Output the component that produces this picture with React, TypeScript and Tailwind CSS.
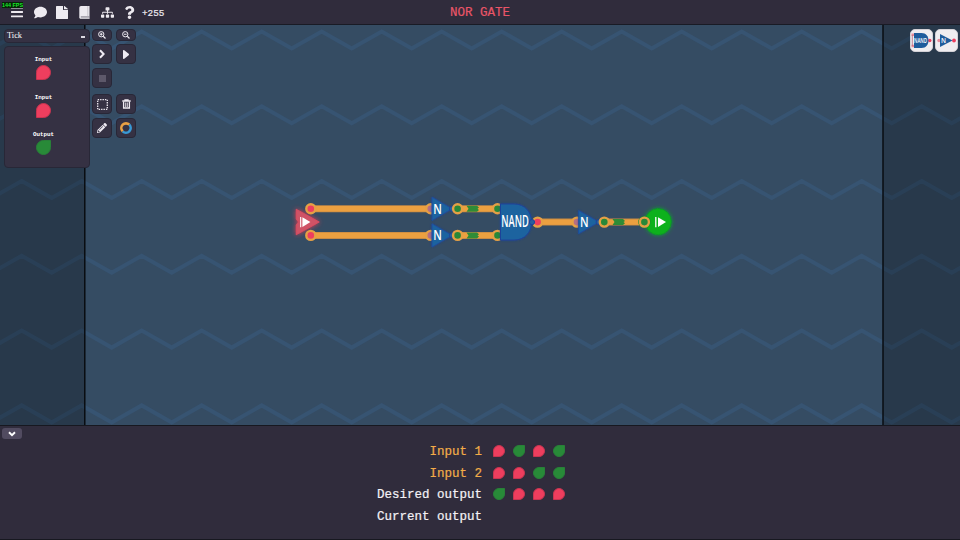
import * as React from "react";
import {
  FaBars,
  FaComment,
  FaFile,
  FaPencilAlt,
  FaPlay,
  FaQuestion,
  FaSitemap,
} from "react-icons/fa";

const RED = "#ee3e5e";
const GREEN = "#288838";

const truthTable = [
  { label: "Input 1", color: "text-[#f2ac48]", values: [0, 1, 0, 1] },
  { label: "Input 2", color: "text-[#f2ac48]", values: [0, 0, 1, 1] },
  { label: "Desired output", color: "text-[#f4f2f6]", values: [1, 0, 0, 0] },
  { label: "Current output", color: "text-[#f4f2f6]", values: [] },
];

const ticks = [
  { label: "Input", on: false },
  { label: "Input", on: false },
  { label: "Output", on: true },
];

function Drop({ on, size }: { on: boolean; size: string }) {
  return (
    <span
      className={`block border ${size} ${
        on
          ? "rounded-full rounded-tr-none border-[#288038] bg-[#288a38]"
          : "rounded-full rounded-bl-none border-[#c93551] bg-[#ee3e5e]"
      }`}
    />
  );
}

function ToolButton({ size = "h-5", className = "", children }: any) {
  return (
    <button
      className={`flex ${size} w-5 items-center justify-center rounded-[4px] border border-[#282737] bg-[#353143] text-[#eeeaf2] ${className}`}
    >
      {children}
    </button>
  );
}

function Magnifier({ plus }: { plus?: boolean }) {
  return (
    <svg viewBox="0 0 16 16" className="h-2 w-2" fill="none" stroke="currentColor" strokeWidth="2">
      <circle cx="6.5" cy="6.5" r="5.3" />
      <path d="M10.5 10.5L15 15" strokeWidth="2.6" />
      <path d="M3.8 6.5H9.2" />
      {plus && <path d="M6.5 3.8V9.2" />}
    </svg>
  );
}

function zigzag(y: number) {
  let d = `M-38.3 ${y}`;
  for (let i = 1; i < 35; i++) {
    d += ` L${-38.3 + i * 30} ${i % 2 ? y + 17 : y}`;
  }
  return d;
}

function Wire({ x1, x2, y }: { x1: number; x2: number; y: number }) {
  return (
    <g>
      <path d={`M${x1} ${y}H${x2}`} stroke="#c98a43" strokeWidth="7" />
      <path d={`M${x1} ${y}H${x2}`} stroke="#eca040" strokeWidth="5.4" />
    </g>
  );
}

function Pin({ x, y, color }: { x: number; y: number; color: string }) {
  return <circle cx={x} cy={y} r="4.5" fill={color} stroke="#e5a045" strokeWidth="2.4" />;
}

function Pulse({ x, y }: { x: number; y: number }) {
  return (
    <path
      d={`M${x - 6} ${y - 3}H${x + 4.5}L${x + 6.5} ${y - 1.2}L${x + 5} ${y}L${x + 6.5} ${y + 1.2}L${x + 4.5} ${y + 3}H${x - 6}L${x - 4} ${y}Z`}
      fill="#2f8c36"
    />
  );
}

function NotGate({ x, y }: { x: number; y: number }) {
  return (
    <g>
      <path
        d={`M${x} ${y - 11.6}L${x + 20} ${y}L${x} ${y + 11.6}Z`}
        fill="#1f649f"
        stroke="#1c4da0"
        strokeWidth="0.9"
        filter="url(#blueGlow)"
      />
      <circle cx={x + 20} cy={y} r="2.6" fill="#285f9c" stroke="#1c439a" strokeWidth="1" />
      <text
        x={x + 1.2}
        y={y + 4.9}
        textLength="8.6"
        lengthAdjust="spacingAndGlyphs"
        className="fill-white font-['Open_Sans',sans-serif] text-[14px] font-semibold"
      >
        N
      </text>
    </g>
  );
}

function Board() {
  return (
    <svg viewBox="0 25 960 400" className="block h-full w-full">
      <defs>
        <filter id="blueGlow" x="-30%" y="-30%" width="160%" height="160%">
          <feDropShadow dx="0" dy="0" stdDeviation="1.2" floodColor="#1d3c9b" floodOpacity="0.65" />
        </filter>
        <filter id="redGlow" x="-50%" y="-50%" width="200%" height="200%">
          <feDropShadow dx="0" dy="0" stdDeviation="2.4" floodColor="#f03a50" floodOpacity="0.9" />
        </filter>
        <filter id="greenGlow" x="-50%" y="-50%" width="200%" height="200%">
          <feDropShadow dx="0" dy="0" stdDeviation="2.2" floodColor="#08b820" floodOpacity="0.8" />
        </filter>
        <filter id="soft" colorInterpolationFilters="sRGB">
          <feGaussianBlur stdDeviation="0.7" />
        </filter>
      </defs>

      <rect y="25" width="960" height="400" fill="#354c63" />
      <g fill="none" stroke="#375472" strokeWidth="4" filter="url(#soft)">
        {[31.5, 106.3, 181, 255.8, 330.6, 405.4].map((y) => (
          <path key={y} d={zigzag(y)} />
        ))}
      </g>
      <rect y="25" width="85" height="400" fill="#000" opacity="0.24" />
      <rect x="883" y="25" width="77" height="400" fill="#000" opacity="0.24" />
      <path d="M84.8 25V425M883 25V425" stroke="#07090d" strokeWidth="1.4" />

      {/* input node */}
      <path
        d="M296.2 209.2L319.3 222L296.2 234.8V225L298.5 222L296.2 219Z"
        fill="#cf5366"
        stroke="#e04a60"
        strokeWidth="0.8"
        filter="url(#redGlow)"
      />
      <path d="M300.7 217V227.3" stroke="#fff" strokeWidth="1.1" />
      <path d="M302.4 217.2L310.4 222L302.4 227Z" fill="#fff" />

      <Wire x1={311} x2={430} y={208.8} />
      <Wire x1={311} x2={430} y={235.4} />
      <Pin x={310.8} y={208.8} color={RED} />
      <Pin x={310.8} y={235.4} color={RED} />

      {[208.8, 235.4].map((y) => (
        <g key={y}>
          <Pin x={430.8} y={y} color="#b56f83" />
          <NotGate x={432} y={y} />
          <Wire x1={458} x2={497} y={y} />
          <Pulse x={472.5} y={y} />
          <Pin x={457.6} y={y} color={GREEN} />
          <Pin x={497.5} y={y} color={GREEN} />
        </g>
      ))}

      <path
        d="M500.5 204H514C525 204 531.5 212 531.5 222S525 240 514 240H500.5Z"
        fill="#1f649f"
        stroke="#1c4399"
        strokeWidth="1"
        filter="url(#blueGlow)"
      />
      <text
        x="501.3"
        y="227.3"
        textLength="27.5"
        lengthAdjust="spacingAndGlyphs"
        className="fill-white font-['Open_Sans',sans-serif] text-[16px] font-semibold"
      >
        NAND
      </text>

      <Wire x1={539} x2={576} y={222.1} />
      <Pin x={537.6} y={222.1} color={RED} />
      <circle cx="532" cy="222.1" r="2.6" fill="#285f9c" stroke="#1c439a" strokeWidth="1" />
      <Pin x={577} y={222.1} color="#b56f83" />
      <NotGate x={578.7} y={222.1} />
      <Wire x1={605} x2={644} y={222.1} />
      <Pulse x={618.5} y={222.1} />
      <Pin x={604.3} y={222.1} color={GREEN} />

      {/* output node */}
      <circle
        cx="658.2"
        cy="221.7"
        r="13"
        fill="#08b11f"
        stroke="#0a9c22"
        strokeWidth="1"
        filter="url(#greenGlow)"
      />
      <circle cx="644.4" cy="222.1" r="6.2" fill="#188c32" />
      <Pin x={644.4} y={222.1} color={GREEN} />
      <path d="M655.8 217V227.3" stroke="#fff" strokeWidth="1.3" />
      <path d="M658 217.2L666 222L658 227Z" fill="#fff" />
    </svg>
  );
}

function GateCard({ children }: any) {
  return (
    <div className="flex h-[23px] w-[23px] items-center justify-center rounded-[5px] border border-[#d3d1d6] bg-[#efedf0]">
      <svg viewBox="0 0 21 21" className="h-[21px] w-[21px] overflow-visible">
        {children}
      </svg>
    </div>
  );
}

export default function App() {
  return (
    <div className="relative flex h-[540px] w-[960px] flex-col overflow-hidden bg-[#302c3c] font-['Liberation_Mono',monospace]">
      <header className="grid h-[25px] shrink-0 grid-cols-3 items-center border-b border-[#191b25] text-[#edeaf0]">
        <div className="flex items-center pl-[11px]">
          <FaBars className="h-[14px] w-[12px]" preserveAspectRatio="none" />
          <FaComment className="ml-[11px] h-[13px] w-[13px]" />
          <FaFile className="ml-[9px] h-[13px] w-[12px]" preserveAspectRatio="none" />
          <svg viewBox="0 0 11 13" className="ml-[11px] h-[13px] w-[11px]">
            <path d="M2 0H10.5V13H2Q0.3 13 0.3 11.3V1.7Q0.3 0 2 0Z" fill="currentColor" />
            <path d="M1.8 10.7H10.5M1.8 12H10.5" stroke="#777380" strokeWidth="0.7" />
            <path d="M8.8 0V10.3" stroke="#b9b6bf" strokeWidth="0.7" />
          </svg>
          <FaSitemap className="ml-[11px] h-[13px] w-[13px]" />
          <FaQuestion className="ml-[9px] h-[13px] w-[13px]" />
          <span className="mt-[3px] ml-[6px] text-[9.3px] leading-none [-webkit-text-stroke:0.2px_currentColor]">
            +255
          </span>
        </div>
        <h1 className="mt-[3px] text-center text-[12.5px] leading-none text-[#e95568] [-webkit-text-stroke:0.2px_currentColor]">
          NOR GATE
        </h1>
      </header>

      <main className="relative h-[400px] shrink-0">
        <Board />
        <div className="absolute top-1 left-1 flex">
          <div className="flex w-[86px] flex-col gap-[3px]">
            <div className="flex h-[14px] items-center justify-between rounded-[4px] border border-[#282737] bg-[#353143] pr-1 pl-[2px] text-white">
              <span className="pt-px font-['Liberation_Serif',serif] text-[8.4px] leading-none">Tick</span>
              <span className="mt-[2px] h-[1.5px] w-1 bg-[#dcd9e1]" />
            </div>
            <div className="flex h-[122px] flex-col items-center gap-[7.5px] rounded-[4px] border border-[#282737] bg-[#353143] pt-[9px] pr-[7px]">
              {ticks.map((tick, i) => (
                <div key={i} className="flex h-[30px] flex-col items-center gap-[2px]">
                  <span className="text-[5.9px] leading-[7px] font-bold text-white">{tick.label}</span>
                  <Drop on={tick.on} size="h-[15px] w-[15px]" />
                </div>
              ))}
            </div>
          </div>
          <div className="ml-[2px] grid auto-rows-min grid-cols-[20px_20px] gap-x-1">
            <ToolButton size="h-3" className="mb-[3px]">
              <Magnifier plus />
            </ToolButton>
            <ToolButton size="h-3" className="mb-[3px]">
              <Magnifier />
            </ToolButton>
            <ToolButton className="mb-1">
              <svg viewBox="0 0 8 10" className="h-[10px] w-2" fill="none" stroke="currentColor">
                <path d="M2 1.3L5.6 5L2 8.7" strokeWidth="2" />
              </svg>
            </ToolButton>
            <ToolButton className="mb-1">
              <FaPlay className="h-[9px] w-[6px]" preserveAspectRatio="none" />
            </ToolButton>
            <ToolButton className="mb-[6px]">
              <span className="h-[7px] w-[7px] bg-[#5d586a]" />
            </ToolButton>
            <span />
            <ToolButton className="mb-1">
              <svg viewBox="0 0 11 11" className="h-[11px] w-[11px]">
                <rect
                  x="0.7"
                  y="0.7"
                  width="9.6"
                  height="9.6"
                  fill="none"
                  stroke="currentColor"
                  strokeWidth="1.3"
                  strokeDasharray="1.4 1"
                />
              </svg>
            </ToolButton>
            <ToolButton className="mb-1">
              <svg viewBox="0 0 9 10" className="h-[10px] w-[9px]" fill="none" stroke="currentColor">
                <path d="M0.3 2H8.7M3 2V0.9H6V2" strokeWidth="1.3" />
                <path d="M1.6 2.5V9H7.4V2.5" strokeWidth="1.3" />
                <path d="M3.7 3.5V8M5.3 3.5V8" strokeWidth="0.9" />
              </svg>
            </ToolButton>
            <ToolButton>
              <FaPencilAlt className="h-[10px] w-[10px]" />
            </ToolButton>
            <ToolButton>
              <svg viewBox="0 0 12 12" className="h-3 w-3" fill="none" strokeWidth="2.6">
                <path d="M9.3 2.7A4.6 4.6 0 1 0 2.7 9.3" stroke="#e9a045" />
                <path d="M9.3 2.7A4.6 4.6 0 0 1 2.7 9.3" stroke="#3999d5" />
              </svg>
            </ToolButton>
          </div>
        </div>

        <div className="absolute top-1 left-[910px] flex gap-[2px]">
          <GateCard>
            <path d="M0.5 4.8H3M0.5 16H3" stroke="#e88b9a" strokeWidth="2.6" />
            <path d="M1.3 5V16" stroke="#b8687e" strokeWidth="0.8" />
            <circle cx="18.8" cy="10.5" r="1.7" fill={RED} />
            <path d="M3 3H10.5C15 3 17.5 6.5 17.5 10.5S15 18 10.5 18H3Z" fill="#1e5c9c" />
            <text
              x="3"
              y="13.3"
              textLength="13"
              lengthAdjust="spacingAndGlyphs"
              className="fill-white font-['Open_Sans',sans-serif] text-[7.5px] font-semibold"
            >
              NAND
            </text>
          </GateCard>
          <GateCard>
            <circle cx="3" cy="10.5" r="1.7" fill="#e88b9a" />
            <circle cx="18" cy="10.5" r="1.9" fill={RED} />
            <path d="M4 4L16.5 10.5L4 17Z" fill="#1e5c9c" />
            <text
              x="5"
              y="13.2"
              textLength="5"
              lengthAdjust="spacingAndGlyphs"
              className="fill-white font-['Open_Sans',sans-serif] text-[7.5px] font-semibold"
            >
              N
            </text>
          </GateCard>
        </div>
      </main>

      <footer className="flex grow flex-col border-t border-b border-[#171820]">
        <div className="flex h-[15px] items-start pt-[2px] pl-[2px]">
          <button className="flex h-[11px] w-5 items-center justify-center rounded-[3px] bg-[#514b60] text-white">
            <svg viewBox="0 0 8 6" className="h-[6px] w-2" fill="none" stroke="currentColor">
              <path d="M1 1.3L4 4.2L7 1.3" strokeWidth="1.9" />
            </svg>
          </button>
        </div>
        <div className="flex flex-col">
          {truthTable.map((row) => (
            <div key={row.label} className="flex h-[21.5px] items-center">
              <span
                className={`w-[482px] pt-px text-right text-[12.5px] leading-none [-webkit-text-stroke:0.2px_currentColor] ${row.color}`}
              >
                {row.label}
              </span>
              <div className="ml-[11px] flex gap-2 pb-px">
                {row.values.map((v, i) => (
                  <Drop key={i} on={v === 1} size="h-3 w-3" />
                ))}
              </div>
            </div>
          ))}
        </div>
      </footer>

      <span className="absolute top-[2px] left-[2px] bg-[#082208] font-['Liberation_Sans',sans-serif] text-[5.4px] leading-[6px] font-bold text-[#19e82b]">
        144 FPS
      </span>
    </div>
  );
}
